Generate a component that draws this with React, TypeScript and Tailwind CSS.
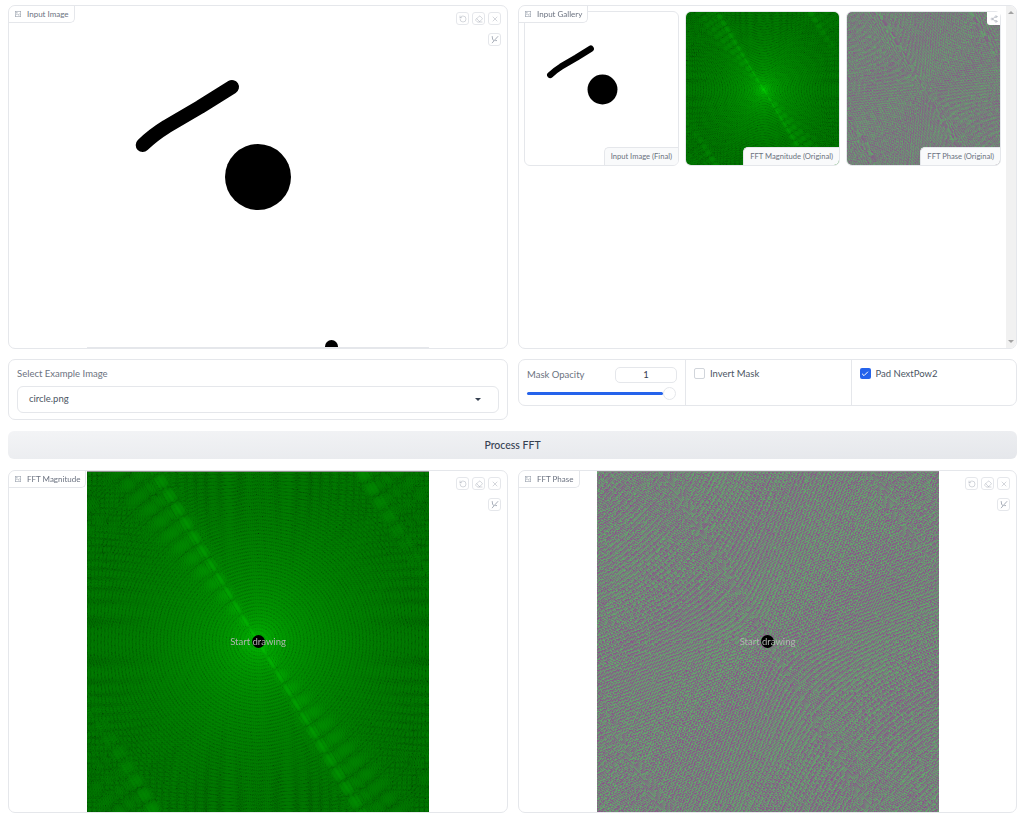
import { useEffect, useRef } from 'react';
import { Eraser, RotateCcw, Share2, X, Check } from 'lucide-react';

const SIZE = 1024;
const STROKE = 'M55.7 139 Q66 129 79.7 120.5 L113 101 L145 81';

// radix-2 fft, in place
const fft1d = (re: Float64Array, im: Float64Array, cos: Float64Array, sin: Float64Array) => {
  const n = re.length;
  for (let i = 1, j = 0; i < n; i++) {
    let bit = n >> 1;
    for (; j & bit; bit >>= 1) j ^= bit;
    j ^= bit;
    if (i < j) {
      let t = re[i];
      re[i] = re[j];
      re[j] = t;
      t = im[i];
      im[i] = im[j];
      im[j] = t;
    }
  }
  for (let len = 2; len <= n; len <<= 1) {
    const step = n / len;
    for (let i = 0; i < n; i += len) {
      for (let k = 0; k < len / 2; k++) {
        const wr = cos[k * step];
        const wi = sin[k * step];
        const a = i + k;
        const b = a + len / 2;
        const xr = re[b] * wr - im[b] * wi;
        const xi = re[b] * wi + im[b] * wr;
        re[b] = re[a] - xr;
        im[b] = im[a] - xi;
        re[a] += xr;
        im[a] += xi;
      }
    }
  }
};

let cached: { mag: ImageData; phase: ImageData } | null = null;

// the drawing sits top left in a padded square, as the app pads to the next power of two
const computeFft = () => {
  if (cached) return cached;
  const c = document.createElement('canvas');
  c.width = SIZE;
  c.height = SIZE;
  const ctx = c.getContext('2d')!;
  const s = 512 / 342;
  ctx.fillStyle = '#000';
  ctx.fillRect(0, 0, SIZE, SIZE);
  ctx.scale(s, s);
  ctx.fillStyle = '#fff';
  ctx.strokeStyle = '#fff';
  ctx.lineCap = 'round';
  ctx.lineJoin = 'round';
  ctx.lineWidth = 14;
  ctx.stroke(new Path2D(STROKE));
  ctx.beginPath();
  ctx.arc(171, 171, 33, 0, Math.PI * 2);
  ctx.fill();
  const px = ctx.getImageData(0, 0, SIZE, SIZE).data;

  const cos = new Float64Array(SIZE / 2);
  const sin = new Float64Array(SIZE / 2);
  for (let k = 0; k < SIZE / 2; k++) {
    cos[k] = Math.cos((-2 * Math.PI * k) / SIZE);
    sin[k] = Math.sin((-2 * Math.PI * k) / SIZE);
  }

  const re = new Float64Array(SIZE * SIZE);
  const im = new Float64Array(SIZE * SIZE);
  for (let i = 0; i < SIZE * SIZE; i++) re[i] = px[i * 4];

  const rr = new Float64Array(SIZE);
  const ri = new Float64Array(SIZE);
  for (let y = 0; y < SIZE; y++) {
    for (let x = 0; x < SIZE; x++) {
      rr[x] = re[y * SIZE + x];
      ri[x] = im[y * SIZE + x];
    }
    fft1d(rr, ri, cos, sin);
    for (let x = 0; x < SIZE; x++) {
      re[y * SIZE + x] = rr[x];
      im[y * SIZE + x] = ri[x];
    }
  }
  for (let x = 0; x < SIZE; x++) {
    for (let y = 0; y < SIZE; y++) {
      rr[y] = re[y * SIZE + x];
      ri[y] = im[y * SIZE + x];
    }
    fft1d(rr, ri, cos, sin);
    for (let y = 0; y < SIZE; y++) {
      re[y * SIZE + x] = rr[y];
      im[y * SIZE + x] = ri[y];
    }
  }

  const mag = new ImageData(SIZE, SIZE);
  const phase = new ImageData(SIZE, SIZE);
  const half = SIZE / 2;
  for (let y = 0; y < SIZE; y++) {
    for (let x = 0; x < SIZE; x++) {
      const i = ((y + half) % SIZE) * SIZE + (x + half) % SIZE;
      const o = (y * SIZE + x) * 4;
      const m = Math.log1p(Math.hypot(re[i], im[i]));
      mag.data[o] = 0;
      mag.data[o + 1] = 35 + (m / 16.5) * 190;
      mag.data[o + 2] = 0;
      mag.data[o + 3] = 255;
      const t = (Math.atan2(im[i], re[i]) + Math.PI) / (2 * Math.PI);
      phase.data[o] = 140 - 45 * t;
      phase.data[o + 1] = 80 + 95 * t;
      phase.data[o + 2] = 140 - 35 * t;
      phase.data[o + 3] = 255;
    }
  }
  cached = { mag, phase };
  return cached;
};

const FftCanvas = ({ kind, className }: { kind: 'mag' | 'phase'; className: string }) => {
  const ref = useRef<HTMLCanvasElement>(null);
  useEffect(() => {
    const ctx = ref.current?.getContext('2d');
    if (!ctx) return;
    ctx.putImageData(computeFft()[kind], 0, 0);
  }, [kind]);
  return <canvas ref={ref} width={SIZE} height={SIZE} className={className} />;
};

const ImgIcon = () => (
  <svg width="6" height="6" viewBox="0 0 10 10" fill="none" stroke="#9ca3af" strokeWidth="1" className="shrink-0">
    <rect x="0.5" y="0.5" width="9" height="9" />
    <path d="M0.5 7.5 L3.5 4.5 L7 8 M5.5 6.5 L7.5 4.5 L9.5 6.5" />
    <circle cx="3" cy="2.8" r="0.7" />
  </svg>
);

const BlockLabel = ({ text }: { text: string }) => (
  <div className="absolute left-0 top-0 z-10 flex h-[17px] items-center gap-[6px] rounded-br-[5px] rounded-tl-[7px] border-b border-r border-[#e5e7eb] bg-white pl-[6px] pr-[5px] text-[8px] text-[#6b7280]">
    <ImgIcon />
    {text}
  </div>
);

const ToolBtn = ({ children }: { children: React.ReactNode }) => (
  <div className="flex h-[13px] w-[13px] items-center justify-center rounded-[3px] border border-[#e5e7eb] bg-white text-[#a8aeb8]">
    {children}
  </div>
);

const BrushIcon = () => (
  <svg width="9" height="9" viewBox="0 0 12 12" fill="none" stroke="currentColor" strokeWidth="1.3" strokeLinecap="round">
    <path d="M3 2 L3.5 6 L5.5 7.5 L3 10.5" />
    <path d="M10.5 2 L5.5 7.5" />
    <circle cx="8" cy="7.5" r="0.4" />
  </svg>
);

const Toolbar = () => (
  <div className="absolute right-[6px] top-[6px] z-10 flex flex-col items-end gap-[8px]">
    <div className="flex gap-[3px]">
      <ToolBtn>
        <RotateCcw size={8} strokeWidth={1.5} />
      </ToolBtn>
      <ToolBtn>
        <Eraser size={8} strokeWidth={1.5} />
      </ToolBtn>
      <ToolBtn>
        <X size={8} strokeWidth={1.5} />
      </ToolBtn>
    </div>
    <ToolBtn>
      <BrushIcon />
    </ToolBtn>
  </div>
);

const Drawing = ({ className }: { className?: string }) => (
  <svg viewBox="0 0 342 342" className={className}>
    <path d={STROKE} fill="none" stroke="#000" strokeWidth="14" strokeLinecap="round" strokeLinejoin="round" />
    <circle cx="171" cy="171" r="33" fill="#000" />
  </svg>
);

const GalleryItem = ({ caption, children }: { caption: string; children: React.ReactNode }) => (
  <div className="relative h-[155px] w-[155px] overflow-hidden rounded-[6px] border border-[#e5e7eb] bg-white">
    {children}
    <div className="absolute bottom-0 right-0 flex h-[18px] items-center rounded-tl-[5px] border-l border-t border-[#e5e7eb] bg-[#f9fafb] px-[6px] text-[7.6px] whitespace-nowrap text-[#6b7280]">
      {caption}
    </div>
  </div>
);

const Check2 = ({ checked, label }: { checked: boolean; label: string }) => (
  <div className="flex flex-1 items-start gap-[5px] border-l border-[#e5e7eb] px-[8px] pt-[8px] text-[9.5px] text-[#4b5563]">
    <div
      className={
        checked
          ? 'flex h-[11px] w-[11px] items-center justify-center rounded-[2px] bg-[#2563eb] text-white'
          : 'h-[11px] w-[11px] rounded-[2px] border border-[#d1d5db] bg-white'
      }
    >
      {checked && <Check size={8} strokeWidth={3} />}
    </div>
    <span className="leading-[11px]">{label}</span>
  </div>
);

const ResultPanel = ({ label, kind, width, canvas }: { label: string; kind: 'mag' | 'phase'; width: string; canvas: string }) => (
  <div className={`relative flex h-[343px] justify-center overflow-hidden rounded-[7px] border border-[#e5e7eb] bg-white ${width}`}>
    <BlockLabel text={label} />
    <Toolbar />
    <div className="relative h-[341px] w-[342px]">
      <FftCanvas kind={kind} className={canvas} />
      <div className="absolute inset-x-0 top-0 h-px bg-[#8a8f8a]" />
      <div className="absolute left-[164.5px] top-[164px] h-[13px] w-[13px] rounded-full bg-black" />
      <div className="absolute left-0 right-0 top-[165px] text-center text-[9.5px] leading-[12px] text-[#b0b6b0]">
        Start drawing
      </div>
    </div>
  </div>
);

export default function App() {
  return (
    <div className="flex w-[1024px] flex-col bg-white pl-[8px] pr-[7px] pt-[5px] text-[#374151] font-['Lato',sans-serif]">
      <div className="flex gap-[10px]">
        <div className="relative flex h-[344px] w-[500px] justify-center overflow-hidden rounded-[7px] border border-[#e5e7eb] bg-white">
          <BlockLabel text="Input Image" />
          <Toolbar />
          <div className="relative h-[342px] w-[342px] overflow-hidden border-b border-[#e5e7eb]">
            <Drawing className="h-[342px] w-[342px]" />
            <div className="absolute left-[237.5px] top-[333.5px] h-[13px] w-[13px] rounded-full bg-black" />
          </div>
        </div>
        <div className="relative flex h-[344px] w-[499px] overflow-hidden rounded-[7px] border border-[#e5e7eb] bg-white">
          <BlockLabel text="Input Gallery" />
          <div className="flex flex-1 gap-[6px] pl-[5px] pt-[5px]">
            <GalleryItem caption="Input Image (Final)">
              <Drawing className="h-[155px] w-[155px]" />
            </GalleryItem>
            <GalleryItem caption="FFT Magnitude (Original)">
              <FftCanvas kind="mag" className="h-[155px] w-[155px]" />
            </GalleryItem>
            <GalleryItem caption="FFT Phase (Original)">
              <FftCanvas kind="phase" className="h-[155px] w-[155px]" />
            </GalleryItem>
          </div>
          <div className="absolute right-[16px] top-[6px] flex h-[13px] w-[13px] items-center justify-center rounded-bl-[3px] bg-white text-[#9ca3af]">
            <Share2 size={8} strokeWidth={1.5} />
          </div>
          <div className="flex w-[10px] flex-col items-center justify-between bg-[#f1f1f1] py-[5px] text-[#9ca3af]">
            <div className="h-0 w-0 border-x-[3px] border-b-[3px] border-x-transparent border-b-[#a3a3a3]" />
            <div className="h-0 w-0 border-x-[3px] border-t-[3px] border-x-transparent border-t-[#a3a3a3]" />
          </div>
        </div>
      </div>

      <div className="mt-[10px] flex items-start gap-[10px]">
        <div className="h-[61px] w-[500px] rounded-[7px] border border-[#e5e7eb] bg-white px-[8px] pt-[8px]">
          <div className="text-[9.5px] leading-[12px] text-[#6b7280]">Select Example Image</div>
          <div className="mt-[6px] flex h-[27px] items-center justify-between rounded-[6px] border border-[#e5e7eb] pl-[11px] pr-[17px] text-[9.5px] text-[#4b5563]">
            circle.png
            <div className="h-0 w-0 border-x-[3px] border-t-[3px] border-x-transparent border-t-[#374151]" />
          </div>
        </div>
        <div className="flex h-[47px] w-[499px] rounded-[7px] border border-[#e5e7eb] bg-white">
          <div className="w-[166px] shrink-0 px-[8px] pt-[7px]">
            <div className="flex items-center justify-between">
              <span className="text-[9.5px] text-[#6b7280]">Mask Opacity</span>
              <div className="flex h-[16px] w-[62px] items-center justify-center rounded-[5px] border border-[#e5e7eb] text-[9.5px] text-[#374151]">
                1
              </div>
            </div>
            <div className="relative mt-[9px] h-[3px] w-[136px] rounded-full bg-[#2563eb]">
              <div className="absolute left-[136px] top-[-5px] h-[13px] w-[13px] rounded-full border border-[#e5e7eb] bg-white" />
            </div>
          </div>
          <Check2 checked={false} label="Invert Mask" />
          <Check2 checked label="Pad NextPow2" />
        </div>
      </div>

      <div className="mt-[11px] flex h-[28px] items-center justify-center rounded-[6px] bg-gradient-to-br from-[#f3f4f6] to-[#e5e7eb] pt-px text-[10.5px] font-medium text-[#374151]">
        Process FFT
      </div>

      <div className="mt-[11px] flex gap-[10px]">
        <ResultPanel label="FFT Magnitude" kind="mag" width="w-[500px]" canvas="h-[341px] w-[342px]" />
        <ResultPanel label="FFT Phase" kind="phase" width="w-[499px]" canvas="h-[341px] w-[342px] [image-rendering:pixelated]" />
      </div>
    </div>
  );
}
